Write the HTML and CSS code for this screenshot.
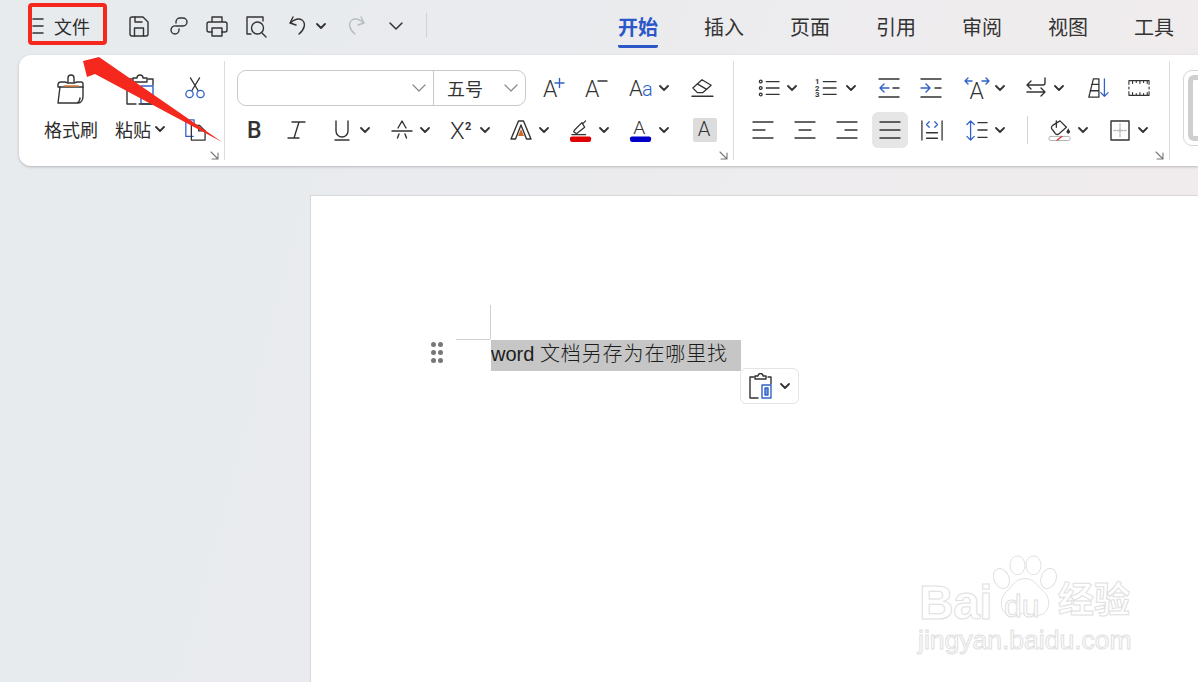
FILE: index.html
```html
<!DOCTYPE html>
<html lang="zh">
<head>
<meta charset="utf-8">
<title>文字文档</title>
<link rel="stylesheet" href="styles.css">
</head>
<body>
<header class="topbar">
  <div class="filemenu">
    <svg class="ic burger" viewBox="0 0 12 18"><path d="M1 2h10M1 9h10M1 16h10"/></svg>
    <span class="filelabel">文件</span>
  </div>
  <div class="quick">
    <svg class="ic q" viewBox="0 0 24 24"><path d="M3 5a2 2 0 0 1 2-2h11l5 5v12a2 2 0 0 1-2 2H5a2 2 0 0 1-2-2z"/><path d="M8 3v5h7M7.500 22v-8h9v8"/></svg>
    <svg class="ic q linkq" viewBox="0 0 24 24"><path d="M9 9V8a4 4 0 0 1 4-4h3a4 4 0 0 1 0 8h-7a4 4 0 0 0-5 4 4 4 0 0 0 4 4 4 4 0 0 0 4-4v-1"/></svg>
    <svg class="ic q" viewBox="0 0 24 24"><path d="M7 8V3h10v5M7 18H4a2 2 0 0 1-2-2v-6a2 2 0 0 1 2-2h16a2 2 0 0 1 2 2v6a2 2 0 0 1-2 2h-3"/><path d="M7 14h10v8H7z"/></svg>
    <svg class="ic q" viewBox="0 0 24 24"><path d="M7 3H3v17h4M7 3h12v4"/><circle cx="13.500" cy="14" r="6"/><path d="M18 19l4 4"/></svg>
    <svg class="ic q undo" viewBox="0 0 24 24"><path d="M6 3L3 9l6 2"/><path d="M3.500 9C7 5 12 4 15 6c4 3 3 9-3 14"/></svg>
    <svg class="ic chev" viewBox="0 0 10 6"><path d="M1 1l4 4 4-4"/></svg>
    <svg class="ic q redo" viewBox="0 0 24 24"><path d="M18 3l3 6-6 2"/><path d="M20.500 9C17 5 12 4 9 6c-4 3-3 9 3 14"/></svg>
    <svg class="ic bigchev" viewBox="0 0 16 10"><path d="M2 2l6 6 6-6"/></svg>
    <span class="qsep"></span>
  </div>
  <nav class="tabs">
    <a class="tab tab-on">开始</a>
    <a class="tab">插入</a>
    <a class="tab">页面</a>
    <a class="tab">引用</a>
    <a class="tab">审阅</a>
    <a class="tab">视图</a>
    <a class="tab">工具</a>
  </nav>
</header>

<section class="ribbon">
  <div class="group g1">
    <div class="bigtool brushcol">
      <svg class="ic big" viewBox="0 0 32 32"><path d="M13 9V5a3 3 0 0 1 6 0v4"/><path d="M6 9h4l3 1h6l3-1h4a2 2 0 0 1 2 2v3H3v-3a3 3 0 0 1 3-2z"/><path d="M5 14L3 30h20c3 0 5-3 5-7V14M22 30c2-1 3-3 3-5"/><path class="orange" d="M9 13h14"/></svg>
      <span class="biglabel">格式刷</span>
    </div>
    <div class="bigtool pastecol">
      <svg class="ic big" viewBox="0 0 32 32"><path d="M8 6H3v25h9M24 6h5v6"/><path d="M9 9V5h4a3 3 0 0 1 6 0h4v4z"/><path class="blue" d="M17 13h12v18H17z"/><path d="M15 31h16"/></svg>
      <span class="biglabel">粘贴<svg class="ic chev labelchev" viewBox="0 0 10 6"><path d="M1 1l4 4 4-4"/></svg></span>
    </div>
    <div class="smallcol">
      <div class="row">
        <svg class="ic i" viewBox="0 0 24 24"><path d="M7 1l8.500 14M17 1L8.500 15"/><circle class="blue" cx="6" cy="18.500" r="4"/><circle class="blue" cx="18" cy="18.500" r="4"/></svg>
      </div>
      <div class="row">
        <svg class="ic i" viewBox="0 0 24 24"><path class="blue" d="M10 19H2V1h9v5"/><path d="M8 7h9l6 6v10H8z"/><path d="M16 7v6h7"/></svg>
      </div>
    </div>
    <svg class="ic corner" viewBox="0 0 9 9"><path d="M1 1l7 7M2 8h6V2"/></svg>
  </div>

  <div class="group g2">
    <div class="row">
      <div class="fontbox">
        <div class="fontname"><svg class="ic selchev" viewBox="0 0 14 8"><path d="M1 1l6 6 6-6"/></svg></div>
        <div class="fontsize"><span>五号</span><svg class="ic selchev" viewBox="0 0 14 8"><path d="M1 1l6 6 6-6"/></svg></div>
      </div>
      <svg class="ic i m17" viewBox="0 0 22 24"><text class="glyph" x="0" y="21" font-size="23">A</text><path class="blue" d="M12 7h9M16.500 2.500v9"/></svg>
      <svg class="ic i m20" viewBox="0 0 22 24"><text class="glyph" x="0" y="21" font-size="23">A</text><path d="M13 5h9"/></svg>
      <span class="tool m23"><svg class="ic i" viewBox="0 0 22 24"><text class="glyph" x="-1" y="20" font-size="22">A</text><text class="glyph blue-t" x="12" y="20" font-size="20">a</text></svg><svg class="ic chev" viewBox="0 0 10 6"><path d="M1 1l4 4 4-4"/></svg></span>
      <svg class="ic i m22" viewBox="0 0 24 24"><path d="M2 12L12 3l10 6-9 8H7z"/><path d="M7 7.500l10 6M1 21h23"/></svg>
    </div>
    <div class="row">
      <svg class="ic i m7" viewBox="0 0 22 24"><text class="glyph medium" x="3" y="20" font-size="23">B</text></svg>
      <svg class="ic i m19" viewBox="0 0 22 24"><path d="M7 4h13M14 4L9 20M3 20h11"/></svg>
      <span class="tool m24"><svg class="ic i" viewBox="0 0 22 24"><path d="M5 3v10a6 6 0 0 0 12 0V3M4 22h14"/></svg><svg class="ic chev" viewBox="0 0 10 6"><path d="M1 1l4 4 4-4"/></svg></span>
      <span class="tool m21"><svg class="ic i" viewBox="0 0 22 24"><path d="M7 10l4-7 4 7M1 13h20M8 16l-1.500 4M14 16l1.500 4"/></svg><svg class="ic chev" viewBox="0 0 10 6"><path d="M1 1l4 4 4-4"/></svg></span>
      <span class="tool m21"><svg class="ic i" viewBox="0 0 22 24"><text class="glyph" x="-1" y="21" font-size="24">X</text><text class="glyph bold" x="14" y="12" font-size="11">2</text></svg><svg class="ic chev" viewBox="0 0 10 6"><path d="M1 1l4 4 4-4"/></svg></span>
      <span class="tool m20"><svg class="ic i" viewBox="0 0 22 24"><path d="M1 21L8.500 3h5L21 21h-4.500L11 7 5.500 21z"/><path class="fillorange" d="M8 18l3-7 3 7z"/></svg><svg class="ic chev" viewBox="0 0 10 6"><path d="M1 1l4 4 4-4"/></svg></span>
      <span class="tool m21"><svg class="i nostroke" viewBox="0 0 24 24"><g class="ic"><path d="M4 14l3 2 9-7-3-5-8 8zM14 5l3-3M2 17h15"/></g><rect x="0" y="19" width="23" height="6" rx="2" class="fillred"/></svg><svg class="ic chev" viewBox="0 0 10 6"><path d="M1 1l4 4 4-4"/></svg></span>
      <span class="tool m21"><svg class="i nostroke" viewBox="0 0 24 24"><text class="glyph" x="3.500" y="16" font-size="21">A</text><rect x="0" y="19" width="23" height="6" rx="2" class="fillblue"/></svg><svg class="ic chev" viewBox="0 0 10 6"><path d="M1 1l4 4 4-4"/></svg></span>
      <span class="shade m24"><svg class="i" viewBox="0 0 24 24"><text class="glyph" x="4" y="19" font-size="22">A</text></svg></span>
    </div>
    <svg class="ic corner" viewBox="0 0 9 9"><path d="M1 1l7 7M2 8h6V2"/></svg>
  </div>

  <div class="group g3">
    <div class="row">
      <span class="tool m6"><svg class="ic i" viewBox="0 0 24 24"><circle cx="3" cy="5" r="1.500"/><circle cx="3" cy="12" r="1.500"/><circle cx="3" cy="19" r="1.500"/><path d="M9 5h14M9 12h14M9 19h14"/></svg><svg class="ic chev" viewBox="0 0 10 6"><path d="M1 1l4 4 4-4"/></svg></span>
      <span class="tool wide m18"><svg class="ic i" viewBox="0 0 24 24"><text class="glyph bold" x="0" y="8" font-size="8.500">1</text><text class="glyph bold" x="0" y="15" font-size="8.500">2</text><text class="glyph bold" x="0" y="22" font-size="8.500">3</text><path d="M9 5h14M9 12h14M9 19h14"/></svg><svg class="ic chev" viewBox="0 0 10 6"><path d="M1 1l4 4 4-4"/></svg></span>
      <svg class="ic i m22" viewBox="0 0 22 24"><path d="M1 3h20M1 21h20"/><path class="blue" d="M11 12H2M6 8l-4 4 4 4"/><path d="M15 12h6"/></svg>
      <svg class="ic i m20" viewBox="0 0 22 24"><path d="M1 3h20M1 21h20"/><path class="blue" d="M1 12h9M6 8l4 4-4 4"/><path d="M15 12h6"/></svg>
      <span class="tool m24"><svg class="ic i over" viewBox="0 0 22 24"><text class="glyph" x="3.500" y="23" font-size="23">A</text><path class="blue" d="M-1 5h7M2 2L-1 5l3 3M16 5h7M20 2l3 3-3 3"/></svg><svg class="ic chev" viewBox="0 0 10 6"><path d="M1 1l4 4 4-4"/></svg></span>
      <span class="tool m20"><svg class="ic i" viewBox="0 0 22 24"><path d="M20 2v5a2 2 0 0 1-2 2H2M6 5L2 9l4 4M2 16h18M16 12l4 4-4 4"/></svg><svg class="ic chev" viewBox="0 0 10 6"><path d="M1 1l4 4 4-4"/></svg></span>
      <svg class="ic i m23" viewBox="0 0 24 24"><path d="M7 2h6v20H2zM3.500 15H13M5 8h8"/><path class="blue" d="M19 2v19M15 17l4 4 4-4"/></svg>
      <svg class="ic i m19 thin" viewBox="0 0 24 24"><path d="M1 4h22M1 20h22M1 4v4M1 16v4M23 4v4M23 16v4M1 11v2M23 11v2"/><path d="M5 4v3M9 4v2M13 4v3M17 4v2M21 4v3M5 20v-3M9 20v-2M13 20v-3M17 20v-2M21 20v-3"/></svg>
    </div>
    <div class="row">
      <svg class="ic i" viewBox="0 0 22 24"><path d="M1 4h20M1 12h12M1 20h20"/></svg>
      <svg class="ic i m20" viewBox="0 0 22 24"><path d="M1 4h20M5 12h12M1 20h20"/></svg>
      <svg class="ic i m20" viewBox="0 0 22 24"><path d="M1 4h20M9 12h12M1 20h20"/></svg>
      <span class="pressed m14"><svg class="ic i" viewBox="0 0 22 24"><path d="M1 4h20M1 12h20M1 20h20"/></svg></span>
      <svg class="ic i m13" viewBox="0 0 24 24"><path d="M1 2v21M23 2v21M6 15h12M6 21h12"/><path class="blue" d="M9 3L6 6l3 3M15 3l3 3-3 3"/></svg>
      <span class="tool m23"><svg class="ic i" viewBox="0 0 24 24"><path class="blue" d="M5 2v21M1 6l4-4 4 4M1 19l4 4 4-4"/><path d="M13 4h10M13 12h10M13 20h10"/></svg><svg class="ic chev" viewBox="0 0 10 6"><path d="M1 1l4 4 4-4"/></svg></span>
      <span class="vsep m22"></span>
      <span class="tool m21"><svg class="ic i" viewBox="0 0 24 24"><path d="M4 7l8-5 7 7-8 7a3 3 0 0 1-4 0L4 12a3 3 0 0 1 0-5z"/><path d="M8 2v7"/><path class="fillink" d="M21 10c-1 2-2 3-2 4a2 2 0 0 0 4 0c0-1-1-2-2-4z"/><rect class="pill" x="0" y="19" width="23" height="4.500" rx="2"/><path class="redline" d="M9 23l5-4"/></svg><svg class="ic chev" viewBox="0 0 10 6"><path d="M1 1l4 4 4-4"/></svg></span>
      <span class="tool m21"><svg class="ic i" viewBox="0 0 22 24"><path d="M2 3h18v19H2z"/><path class="dash" d="M11 6v13M5 12.500h12"/></svg><svg class="ic chev" viewBox="0 0 10 6"><path d="M1 1l4 4 4-4"/></svg></span>
    </div>
    <svg class="ic corner" viewBox="0 0 9 9"><path d="M1 1l7 7M2 8h6V2"/></svg>
  </div>

  <div class="stylebox"><div class="styleinner"></div></div>
</section>

<main class="doc">
  <article class="page">
    <span class="crop crop-v"></span>
    <span class="crop crop-h"></span>
    <span class="handle"><i></i><i></i><i></i><i></i><i></i><i></i></span>
    <p class="line"><span class="sel">word <span class="cjk">文档另存为在哪里找</span></span></p>
    <div class="chip">
      <svg class="ic chipicon" viewBox="0 0 26 26"><path d="M6 4H2v21h8M20 4h3v7"/><path d="M7 6V3h3a2.500 2.500 0 0 1 5 0h3v3z"/><path class="blue" d="M14 12h9v13h-9z"/><path class="fillblue2" d="M17 15h3v7h-3z"/></svg>
      <svg class="ic chev" viewBox="0 0 10 6"><path d="M1 1l4 4 4-4"/></svg>
    </div>
    <div class="mark">
      <svg class="paw" viewBox="0 0 70 66"><ellipse cx="10" cy="24" rx="8" ry="11" transform="rotate(-25 10 24)"/><ellipse cx="27" cy="10" rx="8" ry="10"/><ellipse cx="44" cy="10" rx="8" ry="10"/><ellipse cx="60" cy="24" rx="8" ry="11" transform="rotate(20 60 24)"/><path d="M35 24c10 0 13 8 20 14 8 7 7 24-6 25-6 0-9-2-14-2s-8 2-14 2C8 63 7 46 15 38c7-6 10-14 20-14z"/></svg>
      <span class="mark-bai">Bai</span>
      <span class="mark-du">du</span>
      <span class="mark-jy">经验</span>
      <span class="mark-url">jingyan.baidu.com</span>
    </div>
  </article>
</main>

<div class="redbox"></div>
<svg class="arrow" viewBox="0 0 1198 682"><polygon points="83,61 99,57 222,142 95,74 87,77"/></svg>
</body>
</html>
```

FILE: styles.css
```css
* { box-sizing: border-box; }
html, body { margin: 0; padding: 0; }
body {
  width: 1198px;
  height: 682px;
  overflow: hidden;
  position: relative;
  font-family: "Noto Sans CJK SC", "Liberation Sans", sans-serif;
  color: #333;
  background: linear-gradient(105deg, #e7ebee 0%, #e9ebee 35%, #eeecee 65%, #f1ecec 100%);
}

/* generic icon drawing */
.ic { fill: none; stroke: #333; stroke-width: 1.4; stroke-linecap: round; stroke-linejoin: round; flex: none; display: block; }
.nostroke { fill: none; }
.thin { stroke-width: 1.2; }
.blue { stroke: #2f62c9; }
.orange { stroke: #d9772f; }
.glyph { font-family: "Roboto", "Liberation Sans", sans-serif; font-weight: 300; fill: #333; stroke: none; }
.glyph.bold { font-weight: 700; }
.glyph.medium { font-weight: 500; }
.blue-t { fill: #2f62c9; }
.fillorange { fill: #c9692e; stroke: none; }
.fillred { fill: #e00000; }
.fillblue { fill: #0000c8; }
.fillblue2 { fill: #7f9fe0; stroke: #2f62c9; }
.fillink { fill: #333; stroke: none; }
.pill { stroke: #aaa; stroke-width: 1; }
.redline { stroke: #d33; }
.dash { stroke: #bbb; stroke-dasharray: 2 1.500; }

.i { width: 22px; height: 24px; flex: none; display: block; overflow: visible; }
.chev { width: 10px; height: 6px; stroke-width: 1.8; }
.corner { position: absolute; right: 5px; bottom: 0; width: 9px; height: 9px; stroke: #777; stroke-width: 1.1; }

/* top bar */
.topbar { height: 55px; display: flex; align-items: flex-start; padding-left: 32px; }
.filemenu { display: flex; align-items: center; height: 54px; }
.burger { width: 12px; height: 18px; stroke-width: 1.5; margin-top: -2px; }
.filelabel { font-size: 18px; line-height: 24px; margin-left: 10px; margin-top: -2px; font-weight: 400; color: #2c2c2c; }
.quick { display: flex; align-items: center; height: 54px; margin-left: 37px; }
.q { width: 24px; height: 24px; margin-right: 15px; margin-top: -2px; }
.linkq { margin-left: 1px; margin-right: 14px; }
.undo { margin-left: 4px; margin-right: 5px; }
.quick .chev { margin-right: 19px; margin-top: -2px; }
.redo { stroke: #b9bcbf; margin-right: 21px; margin-left: -2px; }
.bigchev { width: 16px; height: 10px; stroke-width: 1.5; margin-top: -2px; }
.qsep { width: 1px; height: 24px; background: #cfd1d3; margin-left: 22px; margin-top: -4px; }
.tabs { margin-left: auto; margin-right: 24px; display: flex; gap: 46px; }
.tab { display: block; width: 40px; padding-top: 13px; font-size: 20px; line-height: 28px; height: 48px; color: #333; white-space: nowrap; }
.tab-on { font-weight: 700; color: #2b57c9; border-bottom: 3px solid #2b57c9; border-radius: 0 0 2px 2px; }

/* ribbon */
.ribbon {
  margin-left: 19px;
  height: 111px;
  width: 1179px;
  padding-top: 6px;
  background: #fff;
  border-radius: 12px 0 0 12px;
  box-shadow: 0 1px 3px rgba(0, 0, 0, .22);
  display: flex;
  overflow: hidden;
}
.group { position: relative; height: 99px; border-right: 1px solid #dcdcdc; padding-top: 9px; flex: none; }
.g1 { width: 206px; padding-left: 25px; display: flex; }
.g2 { width: 509px; padding-left: 12px; }
.g3 { width: 436px; padding-left: 18px; }
.row { display: flex; align-items: center; height: 36px; margin-bottom: 6px; }

.bigtool { display: flex; flex-direction: column; align-items: center; }
.big { width: 32px; height: 32px; margin-top: 3px; stroke-width: 1.4; }
.biglabel { font-size: 18px; line-height: 26px; margin-top: 11px; display: flex; align-items: center; white-space: nowrap; color: #2c2c2c; }
.brushcol { width: 54px; }
.pastecol { width: 50px; margin-left: 17px; }
.labelchev { margin-left: 4px; }
.smallcol { margin-left: 19px; width: 22px; }

.fontbox { display: flex; width: 289px; height: 36px; border: 1px solid #c9c9c9; border-radius: 9px; }
.fontname { width: 196px; border-right: 1px solid #c9c9c9; display: flex; align-items: center; justify-content: flex-end; padding-right: 7px; }
.fontsize { flex: 1; display: flex; align-items: center; justify-content: space-between; padding: 0 7px 0 13px; font-size: 18px; }
.selchev { width: 14px; height: 8px; stroke: #888; stroke-width: 1.2; }

.tool { display: flex; align-items: center; gap: 7px; flex: none; }
.tool.wide { gap: 9px; }
.shade { width: 24px; height: 24px; background: #dcdcdc; border-radius: 2px; flex: none; display: flex; justify-content: center; }
.pressed { width: 36px; height: 36px; background: #e6e6e6; border-radius: 6px; display: flex; align-items: center; justify-content: center; flex: none; }
.vsep { width: 1px; height: 28px; background: #d4d4d4; flex: none; }
.m6 { margin-left: 6px; } .m7 { margin-left: 7px; }
.m13 { margin-left: 13px; } .m14 { margin-left: 14px; }
.m17 { margin-left: 17px; } .m18 { margin-left: 18px; } .m19 { margin-left: 19px; }
.m20 { margin-left: 20px; } .m21 { margin-left: 21px; } .m22 { margin-left: 22px; }
.m23 { margin-left: 23px; } .m24 { margin-left: 24px; }

.stylebox { margin: 9px 0 0 13px; width: 60px; height: 76px; border: 1px solid #d6d6d6; border-radius: 9px; padding: 4px; flex: none; }
.styleinner { height: 100%; border: 5px solid #cfcfcf; border-right: 0; border-radius: 6px; }

/* document */
.doc { padding: 29px 0 0 310px; }
.page {
  position: relative;
  width: 888px;
  height: 520px;
  background: #fff;
  border: 1px solid #d8d8d8;
  border-right: 0;
  padding: 144px 0 0 180px;
}
.crop { position: absolute; background: #cfcfcf; }
.crop-v { left: 179px; top: 109px; width: 1px; height: 34px; }
.crop-h { left: 145px; top: 143px; width: 34px; height: 1px; }
.handle { position: absolute; left: 120px; top: 146px; display: grid; grid-template-columns: 5px 5px; gap: 3px 2px; }
.handle i { width: 5px; height: 5px; border-radius: 50%; background: #777; display: block; }
.line { margin: 0; font-size: 20px; line-height: 31px; height: 31px; color: #1c1c1c; }
.sel { display: inline-block; width: 250px; height: 31px; line-height: 26px; background: #c6c6c6; font-family: "Liberation Sans", sans-serif; white-space: nowrap; vertical-align: top; }
.cjk { font-family: "Noto Sans CJK SC", sans-serif; font-weight: 300; letter-spacing: .9px; }
.chip { position: absolute; left: 429px; top: 172px; width: 59px; height: 36px; background: #fff; border: 1px solid #e4e4e4; border-radius: 6px; display: flex; align-items: center; gap: 6px; padding-left: 7px; }
.chipicon { width: 26px; height: 26px; }

/* watermark */
.mark { position: absolute; left: 608px; top: 355px; width: 225px; height: 110px; }
.mark span { position: absolute; color: #fff; -webkit-text-stroke: 1px #e0e0e0; white-space: nowrap; font-family: "Liberation Sans", sans-serif; }
.paw { position: absolute; left: 73px; top: 2px; width: 66px; height: 68px; fill: #fff; stroke: #dedede; stroke-width: 1; }
.mark-bai { left: 0; top: 24px; font-size: 48px; line-height: 56px; font-weight: 700; letter-spacing: -.5px; }
.mark-du { left: 85px; top: 36px; font-size: 32px; line-height: 38px; }
.mark-jy { left: 139px; top: 22px; font-size: 36px; line-height: 48px; font-family: "Noto Sans CJK SC", sans-serif !important; font-weight: 700; }
.mark-url { left: -1px; top: 74px; font-size: 26.500px; line-height: 30px; }

/* annotation */
.redbox { position: absolute; left: 28px; top: 3px; width: 79px; height: 42px; border: 4px solid #f5281e; border-radius: 4px; }
.arrow { position: absolute; left: 0; top: 0; width: 1198px; height: 682px; pointer-events: none; }
.arrow polygon { fill: #f5281e; }
```
